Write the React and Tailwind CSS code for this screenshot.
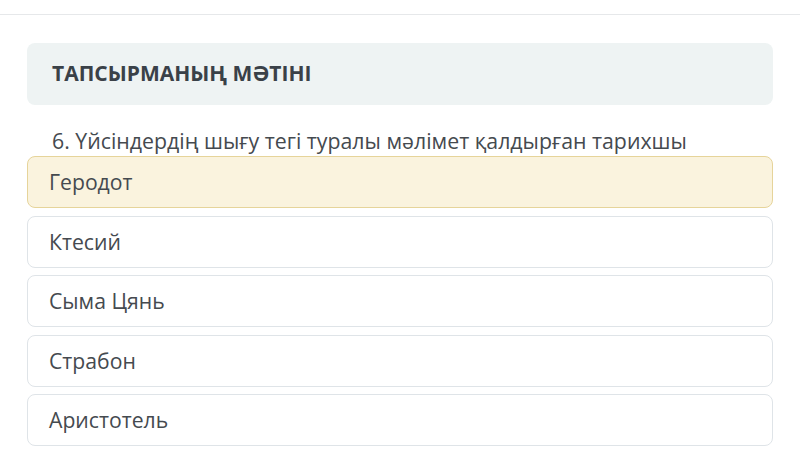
const options = ["Геродот", "Ктесий", "Сыма Цянь", "Страбон", "Аристотель"];

export default function App() {
  return (
    <div className="w-[800px] h-[475px] bg-white overflow-hidden" style={{ fontFamily: '"Open Sans", "Noto Sans", sans-serif' }}>
      <div className="h-[15px] border-b border-[#e6e8ea]" />
      <div className="px-[27px] pt-[28px]">
        <div className="h-[62px] rounded-lg bg-[#eef3f3] flex items-center px-[25px]">
          <h2 className="text-[21px] font-bold text-[#3a4148]">ТАПСЫРМАНЫҢ МӘТІНІ</h2>
        </div>
        <p className="mt-[21px] pl-[25px] text-[21.3px] leading-[30px] text-[#454a4f]">
          6. Үйсіндердің шығу тегі туралы мәлімет қалдырған тарихшы
        </p>
        <div className="flex flex-col gap-[7.5px]">
          {options.map((o, i) => (
            <div
              key={o}
              className={
                i === 0
                  ? "h-[52px] rounded-lg border border-[#e6d49a] bg-[#faf3de] flex items-center px-[21px] text-[21.2px] text-[#454a4f]"
                  : "h-[52px] rounded-lg border border-[#dfe4e8] bg-white flex items-center px-[21px] text-[21.2px] text-[#454a4f]"
              }
            >
              {o}
            </div>
          ))}
        </div>
      </div>
    </div>
  );
}
